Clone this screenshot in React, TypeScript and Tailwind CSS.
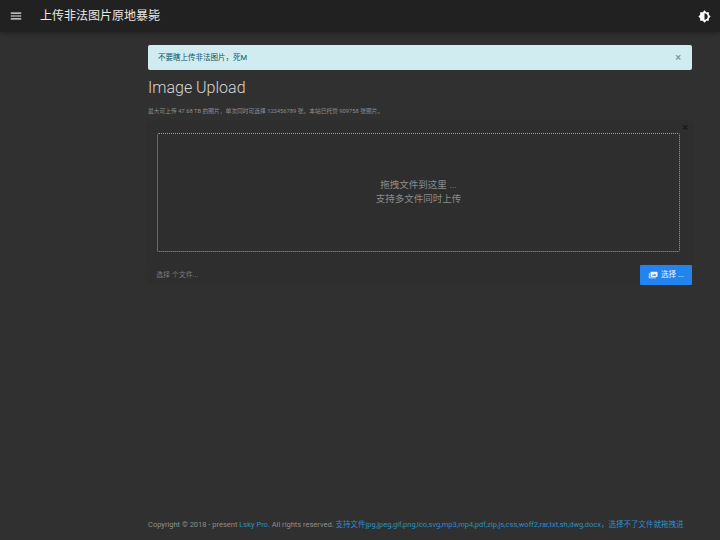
const cjk = "font-['Roboto','Noto_Sans_CJK_SC',sans-serif]";

export default function App() {
  return (
    <div className={`${cjk} flex h-[540px] w-[720px] flex-col overflow-hidden bg-[#303030]`}>
      {/* Toolbar */}
      <header className="flex h-[32px] shrink-0 items-center justify-between bg-[#212121] pl-[9px] pr-[9px] shadow-[0_2px_4px_rgba(0,0,0,0.25)]">
        <div className="flex items-center">
          <svg width="14" height="14" viewBox="0 0 24 24" fill="#eeeeee">
            <path d="M3 18h18v-2H3v2zm0-5h18v-2H3v2zm0-7v2h18V6H3z" />
          </svg>
          <span className="ml-[17px] text-[12px] text-[#e8e8e8]">上传非法图片原地暴毙</span>
        </div>
        <svg width="13" height="13" viewBox="0 0 24 24" fill="white">
          <path d="M20 8.69V4h-4.69L12 .69 8.69 4H4v4.69L.69 12 4 15.31V20h4.69L12 23.31 15.31 20H20v-4.69L23.31 12 20 8.69zM12 18V6c3.31 0 6 2.69 6 6s-2.69 6-6 6z" />
        </svg>
      </header>

      {/* Main */}
      <main className="ml-[148px] mr-[28px] flex flex-1 flex-col">
        <div className="mt-[13px] flex h-[25px] items-center justify-between rounded-[2px] bg-[#d1ecf1] pl-[10px] pr-[11px] text-[7.5px] text-[#0c5460]">
          <span>不要瞎上传非法图片，死M</span>
          <span className="text-[11px] font-bold leading-none text-[#7d9da5]">×</span>
        </div>

        <h1 className="mt-[6px] text-[16px] font-light leading-[24px] text-[#d8d8d8]">Image Upload</h1>
        <p className="mt-[6px] text-[5.75px] leading-[10px] text-[#8f8f8f]">
          最大可上传 47.68 TB 的图片，单次同时可选择 123456789 张。本站已托管 909758 张图片。
        </p>

        {/* Drop zone */}
        <div className="relative mt-[7px] h-[139px] rounded-[2px] bg-[#2e2e2e] pb-[10px] pl-[9px] pr-[12px] pt-[10px] shadow-[0_0_3px_rgba(0,0,0,0.12)]">
          <span className="absolute right-[4px] top-[-1px] text-[11px] font-bold leading-none text-[#191919]">×</span>
          <div className="flex h-full flex-col items-center justify-center rounded-[2px] border border-dotted border-[#a0a0a0] pb-[2px] text-[9.5px] leading-[14px] text-[#8c8c8c]">
            <span>拖拽文件到这里 ...</span>
            <span>支持多文件同时上传</span>
          </div>
        </div>

        {/* File input */}
        <div className="mt-[3px] flex h-[20px] items-center justify-between bg-[#2e2e2e]">
          <span className="pl-[8px] text-[7px] text-[#7a7a7a]">选择 个文件...</span>
          <button className="flex h-full w-[52px] items-center justify-center gap-[3px] rounded-[1px] bg-[#2484ee] text-[7.5px] text-[#e8f1fd]">
            <svg width="10" height="10" viewBox="0 0 24 24" fill="currentColor">
              <path d="M2 8h2v10h15v2H4a2 2 0 0 1-2-2V8z" />
              <path d="M8 4h13a2 2 0 0 1 2 2v9a2 2 0 0 1-2 2H8a2 2 0 0 1-2-2V6a2 2 0 0 1 2-2zm1 10h11l-3.5-5-2.5 3-2-1.5L9 14z" fillRule="evenodd" />
            </svg>
            <span>选择 ...</span>
          </button>
        </div>

        {/* Footer */}
        <footer className="mb-[10px] mt-auto whitespace-nowrap text-[7.5px] leading-[10px] text-[#8e8e8e]">
          Copyright © 2018 - present <span className="text-[#2b8dcb]">Lsky Pro.</span> All rights reserved.{" "}
          <span className="text-[#2b8dcb]">支持文件jpg,jpeg,gif,png,ico,svg,mp3,mp4,pdf,zip,js,css,woff2,rar,txt,sh,dwg,docx，选择不了文件就拖拽进</span>
        </footer>
      </main>
    </div>
  );
}
